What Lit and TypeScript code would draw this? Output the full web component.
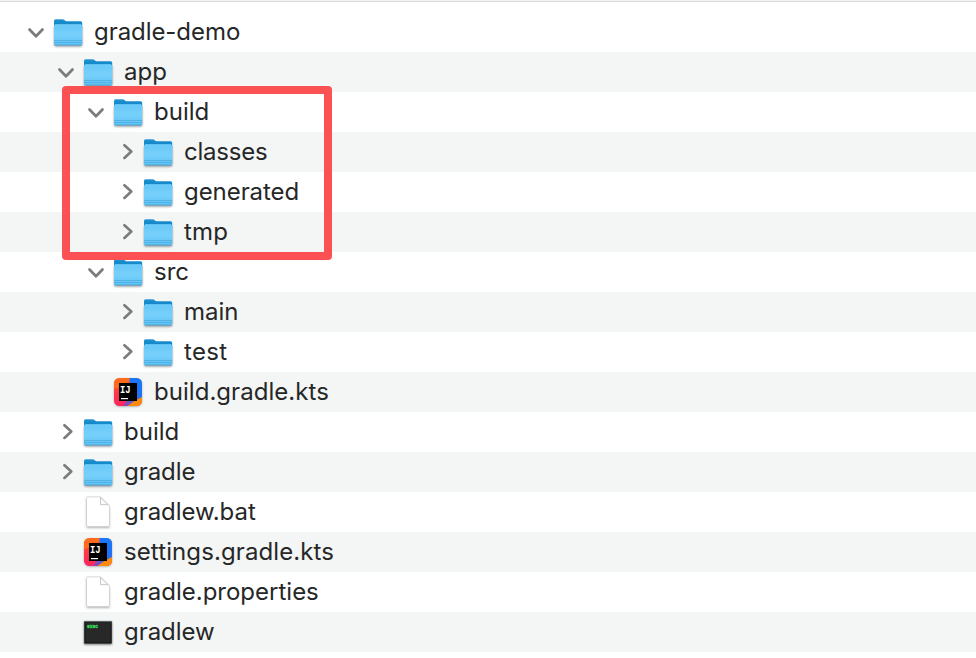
import { LitElement, html, css, svg } from "lit";
import { customElement, property } from "lit/decorators.js";
import { classMap } from "lit/directives/class-map.js";
import { styleMap } from "lit/directives/style-map.js";

type Kind = "folder" | "idea" | "file" | "exec";
type Item = { name: string; depth: number; kind: Kind; open?: boolean; spacing: number };

const ITEMS: Item[] = [
  { name: "gradle-demo", depth: 0, kind: "folder", open: true, spacing: -0.06 },
  { name: "app", depth: 1, kind: "folder", open: true, spacing: 0 },
  { name: "build", depth: 2, kind: "folder", open: true, spacing: 0 },
  { name: "classes", depth: 3, kind: "folder", spacing: -0.22 },
  { name: "generated", depth: 3, kind: "folder", spacing: -0.06 },
  { name: "tmp", depth: 3, kind: "folder", spacing: 0.2 },
  { name: "src", depth: 2, kind: "folder", open: true, spacing: 0 },
  { name: "main", depth: 3, kind: "folder", spacing: 0 },
  { name: "test", depth: 3, kind: "folder", spacing: 0.3 },
  { name: "build.gradle.kts", depth: 2, kind: "idea", spacing: 0.04 },
  { name: "build", depth: 1, kind: "folder", spacing: 0 },
  { name: "gradle", depth: 1, kind: "folder", spacing: -0.06 },
  { name: "gradlew.bat", depth: 1, kind: "file", spacing: -0.06 },
  { name: "settings.gradle.kts", depth: 1, kind: "idea", spacing: 0.1 },
  { name: "gradle.properties", depth: 1, kind: "file", spacing: 0 },
  { name: "gradlew", depth: 1, kind: "exec", spacing: -0.04 },
];

const folder = svg`
  <defs>
    <linearGradient id="back" x1="0" y1="0" x2="0" y2="1">
      <stop offset="0" stop-color="#2f9ad6"/><stop offset=".2" stop-color="#1a8ccb"/><stop offset="1" stop-color="#0a86cc"/>
    </linearGradient>
    <linearGradient id="front" x1="0" y1="0" x2="0" y2="1">
      <stop offset="0" stop-color="#68c8f8"/><stop offset=".5" stop-color="#77d0fb"/><stop offset="1" stop-color="#5fc2f5"/>
    </linearGradient>
  </defs>
  <rect class="soft" x="3.2" y="14" width="28" height="20.4" rx="1.5" fill="#000" opacity=".45"/>
  <path d="M3 13V8.8Q3 7.2 4.600 7.2H11.600Q12.700 7.200 13.500 8L14.300 8.700Q15 9.300 16 9.300H29.700Q31.200 9.300 31.200 10.800V16H3Z" fill="url(#back)"/>
  <path d="M3 14Q3 12.400 4.600 12.400H29.600Q31.200 12.400 31.200 14V31.800Q31.200 33.300 29.700 33.300H4.500Q3 33.300 3 31.800Z" fill="url(#front)"/>
  <path d="M4 12.700H30.200" stroke="#8bdcff" stroke-width=".6"/>
  <path d="M3 28.500H31.200M3 30.500H31.200" stroke="#46a9dd" stroke-width=".7"/>
  <path d="M3.600 33H30.600" stroke="#3f9fd3" stroke-width=".7"/>`;

const idea = svg`
  <defs>
    <clipPath id="badge"><rect x="3" y="6" width="28" height="28" rx="5.500"/></clipPath>
    <linearGradient id="warm" x1=".2" y1="0" x2=".2" y2="1">
      <stop offset="0" stop-color="#ff5a1f"/><stop offset=".5" stop-color="#ff3a45"/><stop offset="1" stop-color="#ff2361"/>
    </linearGradient>
    <linearGradient id="cool" x1="1" y1="0" x2="0" y2="1">
      <stop offset="0" stop-color="#0b7dff"/><stop offset=".5" stop-color="#2b6cf0"/><stop offset="1" stop-color="#a43ea6"/>
    </linearGradient>
  </defs>
  <rect class="soft" x="3.200" y="7" width="27.600" height="27.600" rx="5.500" opacity=".35"/>
  <g clip-path="url(#badge)">
    <rect x="3" y="6" width="28" height="28" fill="url(#warm)"/>
    <path d="M3 6H21L14 14L3 17Z" fill="#ff6a1c"/>
    <path d="M18.500 6H31V26L17 34H12L19 24Z" fill="url(#cool)"/>
    <path d="M31 25V34H16.500L24 28.500Z" fill="#ff8a0a"/>
  </g>
  <rect x="8" y="11" width="18" height="18"/>
  <text class="ij" x="9" y="20.500" textLength="10.600" lengthAdjust="spacingAndGlyphs">IJ</text>
  <rect x="10" y="26" width="7" height="1.200" fill="#fff"/>`;

const file = svg`
  <path class="soft" d="M5.500 6.500H19L28.500 16V36H5.500Z" opacity=".3"/>
  <path d="M6.500 4.900H19.500L28.500 13.900V33.400Q28.500 34.500 27.300 34.500H6.700Q5.500 34.500 5.500 33.400V5.900Q5.500 4.900 6.500 4.900Z" fill="#fff" stroke="#c9c9c9" stroke-width=".7"/>
  <path d="M19.500 5.200V12.700H27.300Z" fill="#fafafa" stroke="#c2c2c2" stroke-width=".9" stroke-linejoin="round"/>`;

const exec = svg`
  <rect class="soft" x="3" y="10" width="28" height="22.500" opacity=".6"/>
  <rect x="3.300" y="9" width="27.400" height="22.500" fill="#101515"/>
  <path d="M3.300 9.400H30.700" stroke="#75888b" stroke-width=".8"/>
  <rect x="4.400" y="10.300" width="25.200" height="20.200" fill="#282828"/>
  <text class="ex" x="6" y="15.600" textLength="11" lengthAdjust="spacingAndGlyphs">exec</text>`;

const ICONS = { folder, idea, file, exec };

@customElement("tree-row")
export class TreeRow extends LitElement {
  @property({ attribute: false }) item!: Item;
  static styles = css`
    :host { display: block; height: 40px; }
    .row { display: flex; align-items: center; height: 40px; }
    .arrow { flex: none; width: 30px; height: 40px; }
    .arrow path { fill: none; stroke: #7b7c7c; stroke-width: 2.700; stroke-linecap: round; stroke-linejoin: round; }
    .icon { flex: none; width: 34px; height: 40px; margin-right: 9px; }
    .soft { filter: blur(0.8px); }
    .ij { font: bold 11px "Liberation Mono", monospace; fill: #fff; }
    .ex { font: bold 6px "Liberation Mono", monospace; fill: #35dc5a; stroke: #35dc5a; stroke-width: 0.35; }
    .label { font: 400 24px/40px Inter, "Liberation Sans", sans-serif; color: #262727; white-space: pre; }
  `;
  render() {
    const { name, depth, kind, open, spacing } = this.item;
    return html`<div class="row" style=${styleMap({ paddingLeft: `${21 + depth * 30}px` })}>
      <svg class="arrow" viewBox="0 0 30 40">
        ${kind !== "folder" ? null : open
          ? svg`<path d="M8.500 17.500L15 24.300L21.500 17.500"/>`
          : svg`<path d="M13.400 13.300L20.300 19.600L13.400 25.900"/>`}
      </svg>
      <svg class="icon" viewBox="0 0 34 40">${ICONS[kind]}</svg>
      <span class="label" style=${styleMap({ letterSpacing: `${spacing}px` })}>${name}</span>
    </div>`;
  }
}

@customElement("app-root")
export class AppRoot extends LitElement {
  static styles = css`
    :host { display: block; height: 658px; background: #fff; position: relative; overflow: hidden; }
    .edge { height: 2px; box-sizing: border-box; background: #f3f3f3; border-bottom: 1px solid #dcdcdc; margin-bottom: 10px; }
    .row.alt { background: #f4f5f5; }
    .highlight { position: absolute; left: 62px; top: 86px; width: 270px; height: 174px; box-sizing: border-box; border: 8px solid #fc5153; border-radius: 4px; }
  `;
  render() {
    return html`<div class="edge"></div>
      ${ITEMS.map((item, i) => html`<tree-row class=${classMap({ row: true, alt: i % 2 === 1 })} .item=${item}></tree-row>`)}
      <div class="highlight"></div>`;
  }
}
